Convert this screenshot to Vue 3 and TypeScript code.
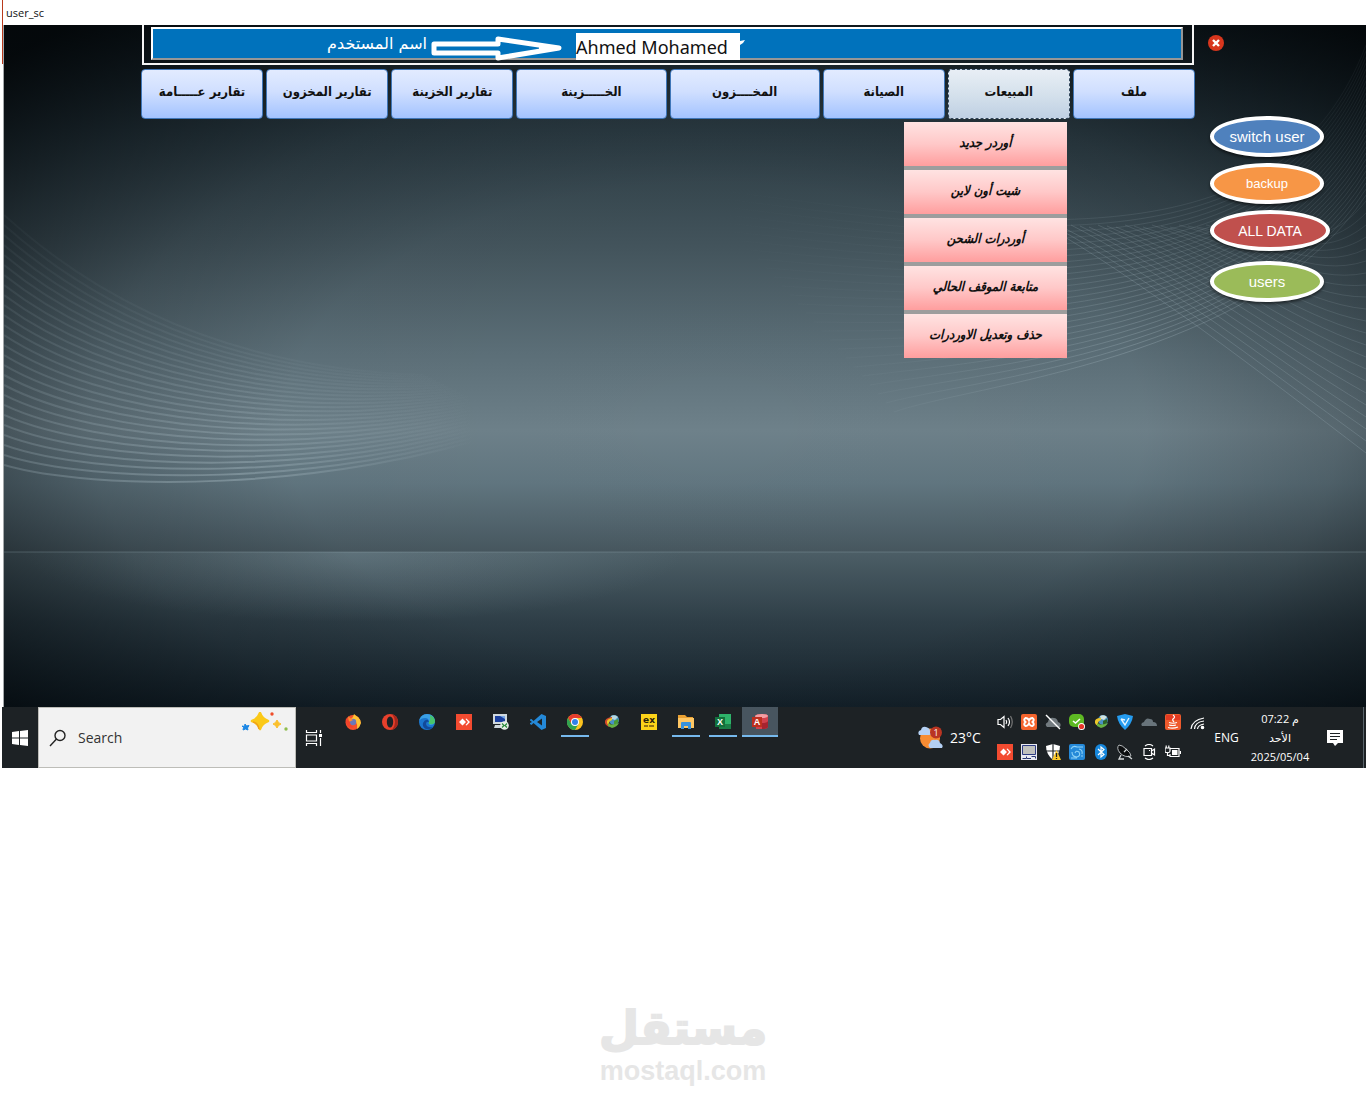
<script setup lang="ts">
import { ref } from 'vue'

interface Tab {
  label: string
  wide?: boolean
  items?: string[]
}

const tabs: Tab[] = [
  { label: 'تقارير عـــــامة' },
  { label: 'تقارير المخزون' },
  { label: 'تقارير الخزينة' },
  { label: 'الخـــــزينة', wide: true },
  { label: 'المخــــزون', wide: true },
  { label: 'الصيانة' },
  {
    label: 'المبيعات',
    items: ['أوردر جديد', 'شيت أون لاين', 'أوردرات الشحن', 'متابعة الموقف الحالي', 'حذف وتعديل الاوردرات'],
  },
  { label: 'ملف' },
]
const openTab = ref('المبيعات')

const actions = [
  { label: 'switch user', kind: 'switch' },
  { label: 'backup', kind: 'backup' },
  { label: 'ALL DATA', kind: 'data' },
  { label: 'users', kind: 'users' },
]

const apps = [
  { id: 'firefox', name: 'Firefox' },
  { id: 'opera', name: 'Opera' },
  { id: 'edge', name: 'Edge' },
  { id: 'anydesk', name: 'AnyDesk' },
  { id: 'remote', name: 'Remote desktop' },
  { id: 'code', name: 'Code editor' },
  { id: 'chrome', name: 'Chrome', running: true },
  { id: 'idm', name: 'Download manager' },
  { id: 'ex', name: 'Express' },
  { id: 'folder', name: 'File Explorer', running: true },
  { id: 'excel', name: 'Excel', running: true },
  { id: 'access', name: 'Access', running: true, active: true },
]

const tray = [
  'volume', 'xampp', 'cloudoff', 'green', 'idm', 'shieldv', 'cloud', 'java', 'wifi',
  'anydesk', 'pc', 'defender', 'swirl', 'bluetooth', 'dish', 'camera', 'battery',
]

const search = ref('')

// Families of thin lines that form the wave pattern of the wallpaper
const leftWaves = Array.from({ length: 26 }, (_, i) => ({
  d: `M0 ${190 + i * 10} C${110 - i} ${290 + i * 7} ${250 + i * 3} ${345 + i * 5} ${420 + i * 4} ${350 + i * 2}`,
  o: 0.06 + i * 0.012,
}))
const rightWaves = Array.from({ length: 26 }, (_, i) => ({
  d: `M1362 ${20 + i * 6} C${1280 - i} ${235 + i * 4} ${1040 - i * 3} ${210 + i * 6} ${690 + i * 8} ${162 + i * 9}`,
  o: 0.12 + i * 0.006,
}))
const crossWaves = Array.from({ length: 22 }, (_, i) => ({
  d: `M${1040 + i * 9} ${200 + (i % 3)} C${1130 + i * 8} ${250 - i * 2} ${1260 + i * 3} ${350 - i * 6} 1362 ${428 - i * 12}`,
  o: 0.2 - i * 0.005,
}))
</script>

<template>
  <div class="shell">
    <header class="titlebar">user_sc</header>

    <main class="desktop">
      <svg class="wallpaper" viewBox="0 0 1362 682" preserveAspectRatio="none" aria-hidden="true">
        <defs>
          <linearGradient id="sky" x1="0" y1="0" x2="0" y2="1">
            <stop offset="0" stop-color="#182329" />
            <stop offset=".2" stop-color="#2c3c44" />
            <stop offset=".43" stop-color="#45565e" />
            <stop offset=".62" stop-color="#5c6f78" />
            <stop offset=".77" stop-color="#6e818a" />
            <stop offset=".87" stop-color="#617680" />
            <stop offset="1" stop-color="#47575f" />
          </linearGradient>
          <linearGradient id="floor" x1="0" y1="0" x2="0" y2="1">
            <stop offset="0" stop-color="#4d5f67" />
            <stop offset=".45" stop-color="#2f3f48" />
            <stop offset="1" stop-color="#14212a" />
          </linearGradient>
          <radialGradient id="shade" gradientUnits="userSpaceOnUse" cx="0" cy="0" r="1" gradientTransform="translate(710 400) scale(960 540)">
            <stop offset="0" stop-color="#000508" stop-opacity="0" />
            <stop offset=".45" stop-color="#000508" stop-opacity=".02" />
            <stop offset=".65" stop-color="#000508" stop-opacity=".2" />
            <stop offset=".82" stop-color="#000508" stop-opacity=".5" />
            <stop offset="1" stop-color="#000305" stop-opacity=".85" />
          </radialGradient>
          <radialGradient id="glow">
            <stop offset="0" stop-color="#7c929c" stop-opacity=".4" />
            <stop offset="1" stop-color="#7c929c" stop-opacity="0" />
          </radialGradient>
          <linearGradient id="fadeleft" gradientUnits="userSpaceOnUse" x1="0" y1="0" x2="470" y2="0">
            <stop offset="0" stop-color="#b5c8d0" stop-opacity=".6" />
            <stop offset=".5" stop-color="#b5c8d0" />
            <stop offset="1" stop-color="#b5c8d0" stop-opacity="0" />
          </linearGradient>
          <linearGradient id="faderight" gradientUnits="userSpaceOnUse" x1="700" y1="0" x2="1362" y2="0">
            <stop offset="0" stop-color="#b5c8d0" stop-opacity="0" />
            <stop offset=".3" stop-color="#b5c8d0" stop-opacity=".2" />
            <stop offset=".65" stop-color="#b5c8d0" />
            <stop offset="1" stop-color="#b5c8d0" stop-opacity=".4" />
          </linearGradient>
          <clipPath id="lower"><rect y="527" width="1362" height="155" /></clipPath>
        </defs>
        <rect width="1362" height="527" fill="url(#sky)" />
        <rect y="527" width="1362" height="155" fill="url(#floor)" />
        <ellipse cx="350" cy="527" rx="330" ry="70" fill="url(#glow)" clip-path="url(#lower)" />
        <rect width="1362" height="682" fill="url(#shade)" />
        <g fill="none">
          <path v-for="(w, i) in leftWaves" :key="'l' + i" :d="w.d" :stroke-opacity="w.o" stroke="url(#fadeleft)" stroke-width="2" />
          <path v-for="(w, i) in rightWaves" :key="'r' + i" :d="w.d" :stroke-opacity="w.o" stroke="url(#faderight)" />
          <path v-for="(w, i) in crossWaves" :key="'c' + i" :d="w.d" :stroke-opacity="w.o" stroke="#b5c8d0" />
          <path d="M0 527H1362" stroke="#b5c8d0" stroke-opacity=".25" />
        </g>
      </svg>

      <div class="stage">
        <div class="center">
          <div class="frame">
            <div class="userbar">
              <span class="userlabel" dir="rtl">اسم المستخدم</span>
              <svg class="arrow" width="133" height="26" viewBox="0 0 133 26" aria-hidden="true">
                <path d="M3 8H67V3L128 12L67 22V17H3Z" fill="none" stroke="#fff" stroke-width="5" stroke-linejoin="round" />
                <path d="M108 9L130 12L108 16Z" fill="#fff" />
              </svg>
              <span class="username">Ahmed Mohamed</span>
              <svg class="tick" width="5" height="27" viewBox="0 0 5 27" aria-hidden="true"><path d="M0 8L5 7L3 10L0 12Z" fill="#fff" /></svg>
            </div>
          </div>

          <nav class="tabs">
            <div v-for="tab in tabs" :key="tab.label" class="tabwrap" :class="{ wide: tab.wide }">
              <button type="button" class="tab" :class="{ open: tab.label === openTab }" dir="rtl" @click="openTab = tab.label">
                {{ tab.label }}
              </button>
              <div v-if="tab.items && tab.label === openTab" class="menu">
                <button v-for="item in tab.items" :key="item" type="button" class="entry" dir="rtl">{{ item }}</button>
              </div>
            </div>
          </nav>
        </div>

        <aside class="side">
          <button type="button" class="close" aria-label="Close">
            <svg width="16" height="16" viewBox="0 0 16 16">
              <circle cx="8" cy="8" r="8" fill="#d8361d" />
              <path d="M5 5L11 11M11 5L5 11" stroke="#fff" stroke-width="2.4" />
            </svg>
          </button>
          <button v-for="a in actions" :key="a.kind" type="button" class="oval" :class="a.kind">{{ a.label }}</button>
        </aside>
      </div>
    </main>

    <footer class="taskbar">
      <button type="button" class="start" aria-label="Start">
        <svg width="16" height="16" viewBox="0 0 16 16"><path fill="#fff" d="M0 2L7 1V7.500H0ZM8 1L16 0V7.500H8ZM0 8.500H7V15L0 14ZM8 8.500H16V16L8 15Z" /></svg>
      </button>

      <label class="search">
        <svg width="18" height="18" viewBox="0 0 18 18" aria-hidden="true"><g fill="none" stroke="#222" stroke-width="1.400"><circle cx="11" cy="6.500" r="5" /><path d="M7.500 10L1 17" /></g></svg>
        <input v-model="search" type="text" placeholder="Search" aria-label="Search" />
        <svg class="sparkles" width="48" height="20" viewBox="0 0 48 20" aria-hidden="true">
          <path d="M19 1Q21 7 27 9Q21 11 19 17Q17 11 11 9Q17 7 19 1Z" fill="#fbc918" stroke="#fbc918" stroke-width="2.500" stroke-linejoin="round" />
          <path d="M12 10Q17 11 18 17" stroke="#f0a018" stroke-width="1.500" fill="none" />
          <path d="M36 8Q37 11 40 12Q37 13 36 16Q35 13 32 12Q35 11 36 8Z" fill="#fbc02d" stroke="#fbc02d" stroke-linejoin="round" />
          <path d="M4 12L5.500 14L8 13.500L6.500 16L7 18L4.500 17L2 18L2.500 15.500L1 14L3.500 14.500Z" fill="#1b87e5" stroke="#1b87e5" />
          <circle cx="31" cy="2" r="1.700" fill="#f04d2a" /><circle cx="45" cy="17" r="1.700" fill="#8fbd4e" />
        </svg>
      </label>

      <button type="button" class="taskview" aria-label="Task view">
        <svg width="18" height="16" viewBox="0 0 18 16" fill="none" stroke="#fff" stroke-width="1.200"><path d="M1.500 0V2.500H11.500V0M1.500 16V13.500H11.500V16M1.500 5H11.500V11H1.500ZM15.500 0V3M15.500 8V16" /><path d="M14 4H17V7H14Z" fill="#fff" stroke="none" /></svg>
      </button>

      <div class="apps">
        <button v-for="a in apps" :key="a.id" type="button" class="app" :class="{ running: a.running, active: a.active }" :aria-label="a.name">
          <svg width="16" height="16" viewBox="0 0 16 16">
            <g v-if="a.id === 'firefox'">
              <circle cx="8" cy="8.500" r="7.500" fill="#f4512c" /><path d="M6 5L8 3L9 0Q11 2 13 3Q16 6 16 9Q15 13 12 15Q13 11 11 8Q9 5 6 5Z" fill="#ffc233" /><circle cx="8" cy="8" r="3.200" fill="#6c78b8" /><path d="M3 2L5 4L8 6L6 7L4 8Z" fill="#ff8c2e" /><path d="M1 4Q0 9 3 12Q6 15 9 13Q5 12 5 8L3 6Z" fill="#f3432b" />
            </g>
            <g v-else-if="a.id === 'opera'">
              <circle cx="8" cy="8" r="8" fill="#e8402c" /><path d="M10 0Q16 2 16 8Q16 14 10 16Q13 12 13 8Q13 4 10 0Z" fill="#a6271c" /><ellipse cx="8" cy="8" rx="3.200" ry="5.600" fill="#1d2225" />
            </g>
            <g v-else-if="a.id === 'edge'">
              <circle cx="8" cy="8" r="8" fill="#1b76cf" /><path d="M0 7Q2 0 8 0Q15 0 16 7Q16 11 11 11Q9 10 10 8Q10 4 6 4Q2 4 0 7Z" fill="#3aa0e6" /><path d="M11 1Q16 3 16 8Q15 11 11 10Q9 10 10 8Q12 5 11 1Z" fill="#48c46b" /><path d="M10 8Q7 7 7 10Q8 14 14 13Q11 16 7 15Q3 13 4 9Q6 5 9 6Z" fill="#124a9a" />
            </g>
            <g v-else-if="a.id === 'anydesk'">
              <path fill="#f34b30" d="M0 0H16V16H0Z" /><path fill="#fff" d="M3 8L6.500 4.500L10 8L6.500 11.500ZM9.500 5L10.500 4.500L14 8L10.500 11.500L9.500 11L12 8Z" />
            </g>
            <g v-else-if="a.id === 'remote'">
              <path fill="#cfd8dd" d="M0 0H14V10H0ZM2 11H10V14H1Z" /><path fill="#1a3f9e" d="M2 2H12V8H2Z" /><path fill="#78a8e8" d="M7 2H12V5Z" /><circle cx="11.500" cy="11.500" r="4.300" fill="#e8efe8" /><path d="M9 9.500L11 11.500L9 13.500M14 9.500L12 11.500L14 13.500" stroke="#2b8c3d" stroke-width="1.300" fill="none" />
            </g>
            <g v-else-if="a.id === 'code'">
              <path fill="#2489d8" d="M11.500 0L16 2V14L11.500 16L3.500 9L1.500 11L0 10V9L2 8L0 6.500V5.500L1.500 5L3.500 7ZM12 4.500L7 8L12 11.500Z" fill-rule="evenodd" />
            </g>
            <g v-else-if="a.id === 'chrome'">
              <circle cx="8" cy="8" r="8" fill="#fcc31e" /><path d="M1 4A8 8 0 0 1 15 4H8L4.500 10Z" fill="#e53d2e" /><path d="M1 4A8 8 0 0 0 8 16L11.500 10H4.500Z" fill="#30a350" /><circle cx="8" cy="8" r="4" fill="#fff" /><circle cx="8" cy="8" r="3" fill="#3180e8" />
            </g>
            <g v-else-if="a.id === 'idm'">
              <circle cx="10" cy="6" r="5" fill="#4a92c4" /><path d="M7 2Q11 0 14 3L11 6L8 5Z" fill="#b7d8dd" /><path d="M10 7L14 5Q16 9 10 11Z" fill="#489b36" /><path d="M8 3Q0 4 1 9Q2 12 6 13L4 9Q5 6 8 5Z" fill="#d0492b" /><path d="M8 4Q2 5 3 9Q4 12 7 12L5 9Q5 7 8 6Z" fill="#ecc62a" /><path d="M4 9Q7 12 15 9Q13 13 8 14L4 12Z" fill="#65b345" />
            </g>
            <g v-else-if="a.id === 'ex'">
              <path fill="#fcd319" d="M0 0H16V16H0Z" /><text x="8" y="9" text-anchor="middle" class="ex">ex</text><path d="M3 12H7M8 12H13" stroke="#6d5416" stroke-width="1.500" />
            </g>
            <g v-else-if="a.id === 'folder'">
              <path fill="#e9a032" d="M0 1H7L9 3H15V6H0Z" /><path fill="#ffc764" d="M0 4H16V14H0Z" /><path fill="#3892dc" d="M3 15V9Q3 8 4 8H12Q13 8 13 9V15H10V12H6V15Z" />
            </g>
            <g v-else-if="a.id === 'excel'">
              <path fill="#2eb36a" d="M4 0H16V15H4Z" /><path fill="#1b7f47" d="M4 4H10V15H4ZM10 10H16V15H10Z" /><path fill="#12703b" d="M0 3H10V13H0Z" /><text x="5" y="11" text-anchor="middle" class="letter">X</text>
            </g>
            <g v-else>
              <path fill="#d1414d" d="M3 2Q4 0 10 0Q16 0 16 2V13Q15 15 10 15H4Z" /><path fill="#f29da2" d="M3 2Q4 0 10 0Q16 0 16 2Q15 4 10 4H4Z" /><path fill="#a5242f" d="M10 9Q15 9 16 7V13Q15 15 10 15Z" /><path fill="#bd2f1e" d="M0 3H10V13H0Z" /><text x="5" y="11" text-anchor="middle" class="letter">A</text>
            </g>
          </svg>
        </button>
      </div>

      <button type="button" class="weather">
        <svg width="25" height="24" viewBox="0 0 25 24" aria-hidden="true">
          <circle cx="12" cy="12.500" r="10" fill="#f78c32" /><path d="M1 9Q-1 5 3 4Q4 0 8 1Q12 2 12 5Q15 9 11 9Z" fill="#b4d0f4" /><path d="M12 22Q9 19 12 17Q13 13 17 14Q21 13 22 17Q26 19 24 22Z" fill="#b4d0f4" />
          <circle cx="18" cy="6.500" r="6" fill="#ba3522" /><text x="18" y="10" text-anchor="middle" class="badge">1</text>
        </svg>
        <span>23°C</span>
      </button>

      <div class="tray">
        <button v-for="(t, i) in tray" :key="i" type="button" class="trayicon" :aria-label="t">
          <svg width="16" height="16" viewBox="0 0 16 16">
            <g v-if="t === 'volume'" fill="none" stroke="#fff" stroke-width="1.200"><path d="M1 5.500H3.500L7 2.500V13.500L3.500 10.500H1Z" /><path d="M9 6Q10.500 8 9 10M11 4Q14 8 11 12" /><path d="M13.500 2Q17 8 13.500 14" stroke="#777" /></g>
            <g v-else-if="t === 'xampp'"><rect width="16" height="16" rx="2" fill="#f5642d" /><path d="M4.500 4Q7 4 8 6.500Q9 4 11.500 4Q14 5.500 11.500 8Q14 10.500 11.500 12Q9 12 8 9.500Q7 12 4.500 12Q2 10.500 4.500 8Q2 5.500 4.500 4Z" fill="none" stroke="#fff" stroke-width="2" /></g>
            <g v-else-if="t === 'cloudoff'"><path d="M2 13Q-1 10 3 8Q4 3 9 4Q12 4 13 8Q17 9 15 13Z" fill="#737b80" /><path d="M1 1L15 15" stroke="#fff" stroke-width="1.400" /></g>
            <g v-else-if="t === 'green'"><rect width="15" height="13" rx="5" fill="#5eb923" /><path d="M4 7L6.500 9L11 5" fill="none" stroke="#fff" stroke-width="1.600" /><circle cx="12.500" cy="12.500" r="3.500" fill="#fff" /><circle cx="12.500" cy="12.500" r="2.600" fill="#e63429" /></g>
            <g v-else-if="t === 'idm'"><circle cx="10" cy="6" r="5" fill="#4a92c4" /><path d="M7 2Q11 0 14 3L11 6L8 5Z" fill="#d3e3dd" /><path d="M10 7L14 5Q16 9 10 11Z" fill="#2c6427" /><path d="M8 4Q1 4 2 9Q3 12 7 12L5 9Q5 7 8 6Z" fill="#ecc62a" /><path d="M4 9Q7 12 15 9Q13 13 8 14L4 12Z" fill="#65b345" /></g>
            <g v-else-if="t === 'shieldv'"><path d="M8 0L16 2Q15 10 8 16Q1 10 0 2Z" fill="#259cf0" /><path d="M4 5L8 11L12 4M4 5L8 6" stroke="#e6f5ff" fill="none" stroke-width="1.400" /></g>
            <g v-else-if="t === 'cloud'"><path d="M1 12Q-1 9 3 8Q5 3 9 5Q12 5 12 8Q16 8 16 12Z" fill="#68747b" /></g>
            <g v-else-if="t === 'java'"><rect width="16" height="16" rx="2" fill="#ee5a2c" /><rect x="1" y="1" width="14" height="5" fill="#e33a22" /><path d="M8 1Q11 3 8 5Q7 6 9 8M4 8.500Q8 10 12 8.500M4 11Q8 12 11 11M3 13.500Q8 15 13 13" fill="none" stroke="#fff" stroke-width="1.200" /></g>
            <g v-else-if="t === 'wifi'" fill="none" stroke="#fff" stroke-width="1.200"><path d="M1 15Q2 6 14 4M4.500 15Q5 8 14 7M7.500 15Q8 11 14 10" /><circle cx="12.500" cy="13.500" r="1.200" fill="#fff" /></g>
            <g v-else-if="t === 'anydesk'"><path fill="#f34b30" d="M0 0H16V16H0Z" /><path fill="#fff" d="M3 8L6.500 4.500L10 8L6.500 11.500ZM9.500 5L10.500 4.500L14 8L10.500 11.500L9.500 11L12 8Z" /></g>
            <g v-else-if="t === 'pc'"><path fill="#e9eaf2" d="M0 0H16V16H0Z" /><path fill="#bfc0bd" stroke="#2d3b82" d="M1.500 1.500H14.500V10.500H1.500Z" /><path fill="none" stroke="#273671" d="M1.500 14.500H5.500V12.500M6 14.500H10M10.500 12.500H14.500V14.500" /></g>
            <g v-else-if="t === 'defender'"><path d="M8 0L15 2Q15 10 8 16Q1 10 1 2Z" fill="#fff" /><path d="M8 0V16M1 7H15" stroke="#22272a" stroke-width="1.200" /><path d="M11.500 6L16 16H7Z" fill="#fcc92a" /><path d="M11.500 9V13M11.500 14V15" stroke="#222" stroke-width="1.300" /></g>
            <g v-else-if="t === 'swirl'"><rect width="16" height="16" rx="2" fill="#2589d8" /><path d="M2 5Q4 1 8 3H14M10 5Q14 6 13 10M3 8Q3 13 8 13Q12 12 10 8Q7 6 6 9M2 14H8M12 12H14" fill="none" stroke="#8fd3f7" stroke-width="1.100" /></g>
            <g v-else-if="t === 'bluetooth'"><rect x="2" width="12" height="16" rx="6" fill="#1687dc" /><path d="M5 5L11 10.500L8 13V3L11 5.500L5 11" fill="none" stroke="#fff" stroke-width="1.200" /></g>
            <g v-else-if="t === 'dish'"><path d="M2 1Q-1 4 3 9Q8 14 14 12Q14 9 9 5Q5 1 2 1Z" fill="#0c0e0f" stroke="#b6babc" /><path d="M7 8L10 5M4 11L2 15H7M11 12L15 15" stroke="#d5d9da" fill="none" stroke-width="1.300" /></g>
            <g v-else-if="t === 'camera'" fill="none" stroke="#fff" stroke-width="1.200"><path d="M3 4.500H10.500V11.500H3ZM10.500 7L13.500 5V11L10.500 9M4 2Q8 -1 12 2M4 14Q8 17 12 14" /><path d="M8 6.500H9" /></g>
            <g v-else fill="none" stroke="#fff" stroke-width="1.200"><path d="M5 4.500H14V12.500H5V10M15.500 7V10" /><path d="M0 4H5V7Q5 8.500 3.500 8.500H1.500Q0 8.500 0 7ZM1.200 4V1.500M3.800 4V1.500M2.500 8.500V11.500H5" /><path d="M7 6H12.500V11H7Z" fill="#fff" stroke="none" /></g>
          </svg>
        </button>
      </div>

      <button type="button" class="lang">ENG</button>
      <button type="button" class="clock">
        <span dir="ltr">07:22 م</span>
        <span>الأحد</span>
        <span>2025/05/04</span>
      </button>
      <button type="button" class="notify" aria-label="Notifications">
        <svg width="16" height="16" viewBox="0 0 16 16"><path fill="#fff" d="M0 0H16V13H11L8 16L6 13H0Z" /><path d="M3 3.500H13M3 6.500H13M3 9.500H10" stroke="#1d2225" /></svg>
      </button>
    </footer>

    <div class="watermark">
      <span class="wordmark" dir="rtl">مستقل</span>
      <span class="domain">mostaql.com</span>
    </div>
  </div>
</template>

<style>
body {
  margin: 0;
  background: #fff;
}
</style>

<style scoped>
.shell {
  position: relative;
  padding-left: 2px;
  font-family: "Open Sans", "Noto Sans", "DejaVu Sans", sans-serif;
}
.shell::before {
  content: "";
  position: absolute;
  left: 2px;
  top: 0;
  width: 1px;
  height: 64px;
  background: #b93a1c;
}
button {
  margin: 0;
  padding: 0;
  border: 0;
  background: none;
  font: inherit;
  color: inherit;
  cursor: pointer;
}
svg {
  display: block;
  flex: none;
}
.titlebar {
  height: 25px;
  padding-left: 4px;
  font-size: 11px;
  line-height: 26px;
  color: #111;
}
.desktop {
  position: relative;
  min-height: 682px;
  margin-left: 1px;
  border-left: 1px solid #a4a8aa;
  background: #182329;
}
.wallpaper {
  position: absolute;
  inset: 0;
  width: 100%;
  height: 100%;
}
.stage {
  position: relative;
  display: grid;
  grid-template-columns: minmax(0, 137fr) minmax(0, 1054fr) minmax(0, 171fr);
}
.center {
  grid-column: 2;
}
.frame {
  margin: 0 1px;
  padding: 2px 9px 3px 7px;
  border: 2px solid #f4f4f4;
  border-top: 0;
}
.userbar {
  display: flex;
  align-items: center;
  height: 29px;
  padding-left: 170px;
  border: 2px solid #fff;
  border-right-color: #969696;
  border-bottom-color: #969696;
  background: #0072bc;
}
.userlabel {
  width: 104px;
  font-family: "DejaVu Sans", sans-serif;
  font-size: 16px;
  line-height: 24px;
  white-space: nowrap;
  color: #fff;
}
.arrow {
  margin: 10px 12px 0 4px;
}
.username {
  width: 164px;
  height: 27px;
  margin-top: 5px;
  background: #fff;
  font-family: "Noto Sans", sans-serif;
  font-size: 18px;
  line-height: 28px;
  white-space: nowrap;
  color: #111;
}
.tick {
  margin-top: 5px;
}
.tabs {
  display: flex;
  gap: 3px;
  margin-top: 4px;
}
.tabwrap {
  position: relative;
  flex: 122 1 0;
}
.tabwrap.wide {
  flex-grow: 150;
}
.tab {
  width: 100%;
  height: 50px;
  padding-bottom: 5px;
  border: 1px solid #3f76b8;
  border-radius: 4px;
  background: linear-gradient(#e2ebff, #d0dfff 45%, #a3c3ff);
  font-family: "DejaVu Sans Condensed", "DejaVu Sans", sans-serif;
  font-size: 13px;
  font-weight: 700;
  white-space: nowrap;
  color: #111;
}
.tab.open {
  border: 1px dashed #33475c;
  background: linear-gradient(#e8eef5, #d5e1ec 50%, #bfd0e3);
}
.menu {
  position: absolute;
  top: 53px;
  right: 3px;
  display: flex;
  flex-direction: column;
  gap: 4px;
  width: 163px;
  background: #9d9d9d;
}
.entry {
  height: 44px;
  padding-bottom: 4px;
  background: linear-gradient(#ffe3e2, #ffc8c8 50%, #ff9e9e);
  font-family: "DejaVu Sans Condensed", "DejaVu Sans", sans-serif;
  font-size: 13px;
  font-weight: 700;
  font-style: italic;
  white-space: nowrap;
  color: #111;
}
.side {
  display: flex;
  flex-direction: column;
  align-items: flex-start;
  gap: 6px;
  padding-left: 15px;
}
.close {
  margin: 10px 0 59px -2px;
}
.oval {
  width: 114px;
  height: 41px;
  border: 4px solid #fff;
  border-radius: 50%;
  box-shadow: 0 2px 3px #0008;
  font-family: "Liberation Sans", sans-serif;
  font-size: 15px;
  color: #fff;
}
.switch {
  background: #4f81bd;
}
.backup {
  background: #f79646;
  font-size: 13px;
}
.data {
  width: 120px;
  background: #c0504d;
  font-size: 14px;
}
.users {
  margin-top: 4px;
  background: #9bbb59;
}
.taskbar {
  display: flex;
  height: 61px;
  background: #1d2225;
  color: #fff;
}
.start,
.taskview {
  display: flex;
  align-items: center;
  justify-content: center;
  width: 36px;
}
.search {
  display: flex;
  box-sizing: border-box;
  width: 258px;
  align-items: center;
  padding: 0 6px 0 10px;
  border: 1px solid #bdbdb8;
  background: #f2f2f2;
}
.search input {
  flex: 1;
  min-width: 0;
  padding: 0 0 0 11px;
  border: 0;
  outline: 0;
  background: none;
  font: 14px/20px "Open Sans", "Noto Sans", sans-serif;
  color: #333;
}
.search input::placeholder {
  color: #333;
  opacity: 1;
}
.sparkles {
  align-self: flex-start;
  margin-top: 4px;
}
.apps {
  display: flex;
  flex: 1;
  gap: 1px;
  padding-left: 3px;
}
.app {
  display: flex;
  justify-content: center;
  width: 36px;
  height: 30px;
  padding-top: 7px;
  box-sizing: border-box;
}
.running {
  background: linear-gradient(#76b9ed, #76b9ed) center bottom / 28px 2px no-repeat;
}
.active {
  background: linear-gradient(#76b9ed, #76b9ed) center bottom / 36px 2px no-repeat #48555f;
}
.ex {
  font: 700 9px "DejaVu Sans", sans-serif;
  fill: #2b210c;
}
.letter {
  font: 700 9px "Liberation Sans", sans-serif;
  fill: #fff;
}
.badge {
  font: 9px "Open Sans", sans-serif;
  fill: #fff;
}
.weather {
  display: flex;
  align-items: center;
  gap: 7px;
  width: 75px;
  font-size: 14px;
}
.tray {
  display: grid;
  grid-template-columns: repeat(8, 24px) 25px;
  grid-template-rows: 30px 30px;
}
.trayicon {
  display: flex;
  align-items: center;
  justify-content: center;
}
.lang {
  width: 33px;
  font-size: 12px;
}
.clock {
  display: flex;
  flex-direction: column;
  align-items: center;
  width: 74px;
  padding: 2px 0;
  font-size: 11px;
  line-height: 19px;
}
.notify {
  display: flex;
  align-items: center;
  justify-content: center;
  width: 47px;
  margin-right: 2px;
  padding-right: 10px;
  box-sizing: border-box;
  border-right: 1px solid #59646b;
}
.watermark {
  display: flex;
  flex-direction: column;
  align-items: center;
  padding: 232px 2px 20px 0;
  color: #e6e6e6;
}
.wordmark {
  font-family: "DejaVu Sans", sans-serif;
  font-size: 46px;
  font-weight: 700;
  line-height: 56px;
  -webkit-text-stroke: 2px #e6e6e6;
}
.domain {
  font-family: "Liberation Sans", sans-serif;
  font-size: 27px;
  font-weight: 700;
  line-height: 30px;
}
</style>
